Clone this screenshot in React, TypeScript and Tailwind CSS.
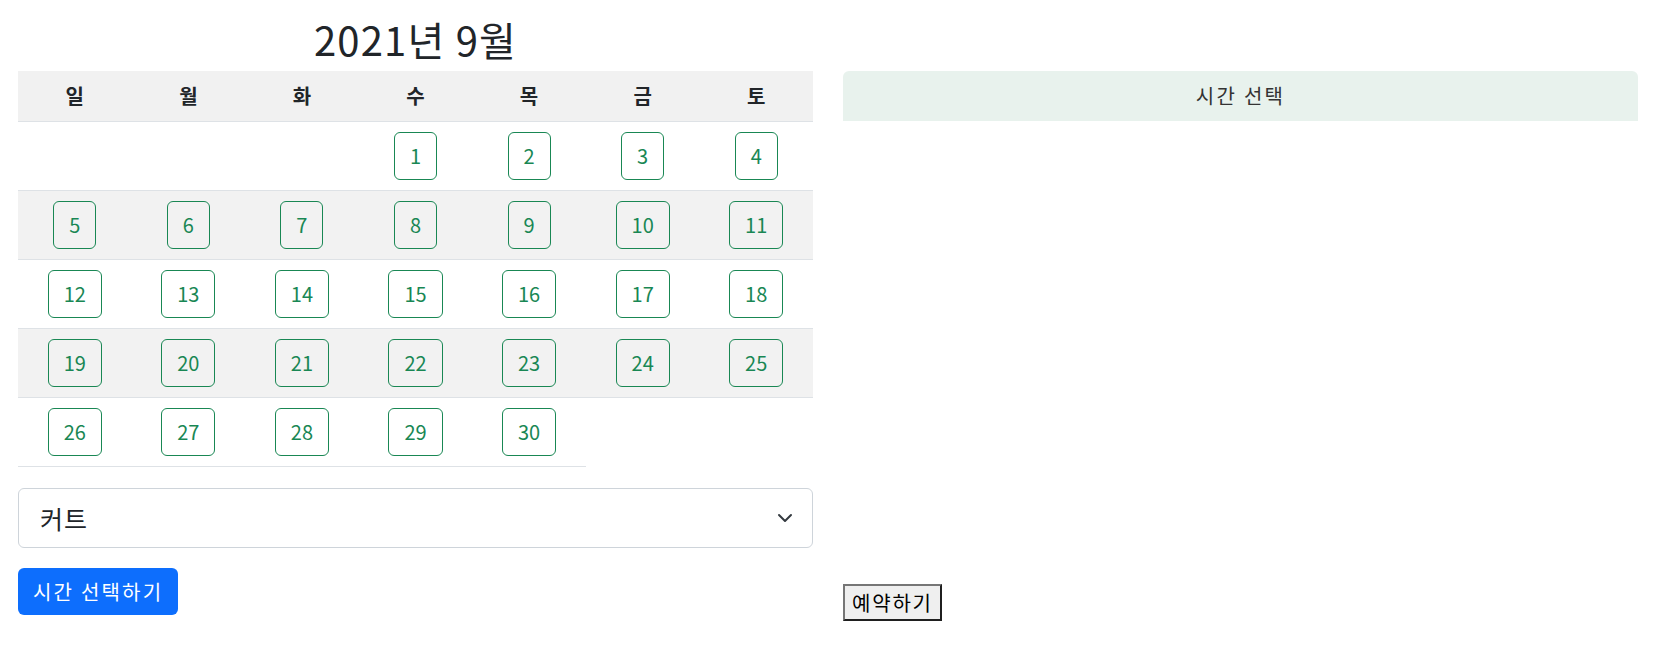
const days = ['일', '월', '화', '수', '목', '금', '토']

// September 2021 starts on Wednesday
const weeks: (number | null)[][] = [
	[null, null, null, 1, 2, 3, 4],
	[5, 6, 7, 8, 9, 10, 11],
	[12, 13, 14, 15, 16, 17, 18],
	[19, 20, 21, 22, 23, 24, 25],
	[26, 27, 28, 29, 30],
]

function DayButton({ day }: { day: number }) {
	return (
		<button className="h-[48px] px-[15px] border border-[#198754] rounded-[6px] text-[#198754] text-[20px] leading-[30px] bg-transparent">
			{day}
		</button>
	)
}

export default function App() {
	return (
		<div className="flex gap-[30px] px-[18px] pt-[15px] text-[#212529] font-['Noto_Sans_CJK_KR','Noto_Sans',sans-serif]">
			<div className="w-[795px] shrink-0 flex flex-col">
				<h2 className="text-[40px] leading-[48px] text-center mb-2 font-normal tracking-[1.2px]">2021년 9월</h2>

				<div className="flex flex-col">
					<div className="grid grid-cols-7 h-[51px] bg-[#f1f1f1] border-b border-[#dee2e6]">
						{days.map((d) => (
							<div key={d} className="flex items-center justify-center text-[20px] font-bold">
								{d}
							</div>
						))}
					</div>
					{weeks.map((week, i) => (
						<div
							key={i}
							className={'grid grid-cols-7 ' + (i % 2 === 1 ? 'bg-[#f2f2f2]' : 'bg-white')}
						>
							{week.map((day, j) => (
								<div key={j} className="h-[69px] flex items-center justify-center border-b border-[#dee2e6]">
									{day && <DayButton day={day} />}
								</div>
							))}
						</div>
					))}
				</div>

				<div className="mt-[21px] h-[60px] border border-[#ced4da] rounded-[6px] flex items-center justify-between pl-[21px] pr-[19px]">
					<span className="text-[25px] leading-[37px] tracking-[1px]">커트</span>
					<svg width="16" height="16" viewBox="0 0 16 16" fill="none">
						<path d="M2 5l6 6 6-6" stroke="#343a40" strokeWidth="2" strokeLinecap="round" strokeLinejoin="round" />
					</svg>
				</div>

				<div className="mt-[20px]">
					<button className="h-[47px] px-[15px] rounded-[6px] bg-[#0d6efd] text-white text-[20px] leading-[30px] tracking-[2.2px]">
						시간 선택하기
					</button>
				</div>
			</div>

			<div className="w-[795px] shrink-0 flex flex-col pt-[56px]">
				<div className="h-[50px] rounded-t-[6px] bg-[#e8f2ed] flex items-center justify-center text-[20px] text-[#333] tracking-[2.3px]">
					시간 선택
				</div>
				<div className="h-[463px]"></div>
				<div>
					<button className="h-[37px] px-[7px] bg-[#efefef] border-2 border-t-[#767676] border-l-[#767676] border-b-[#1f1f1f] border-r-[#1f1f1f] text-[20px] leading-[28px] text-black tracking-[1.8px]">
						예약하기
					</button>
				</div>
			</div>
		</div>
	)
}
